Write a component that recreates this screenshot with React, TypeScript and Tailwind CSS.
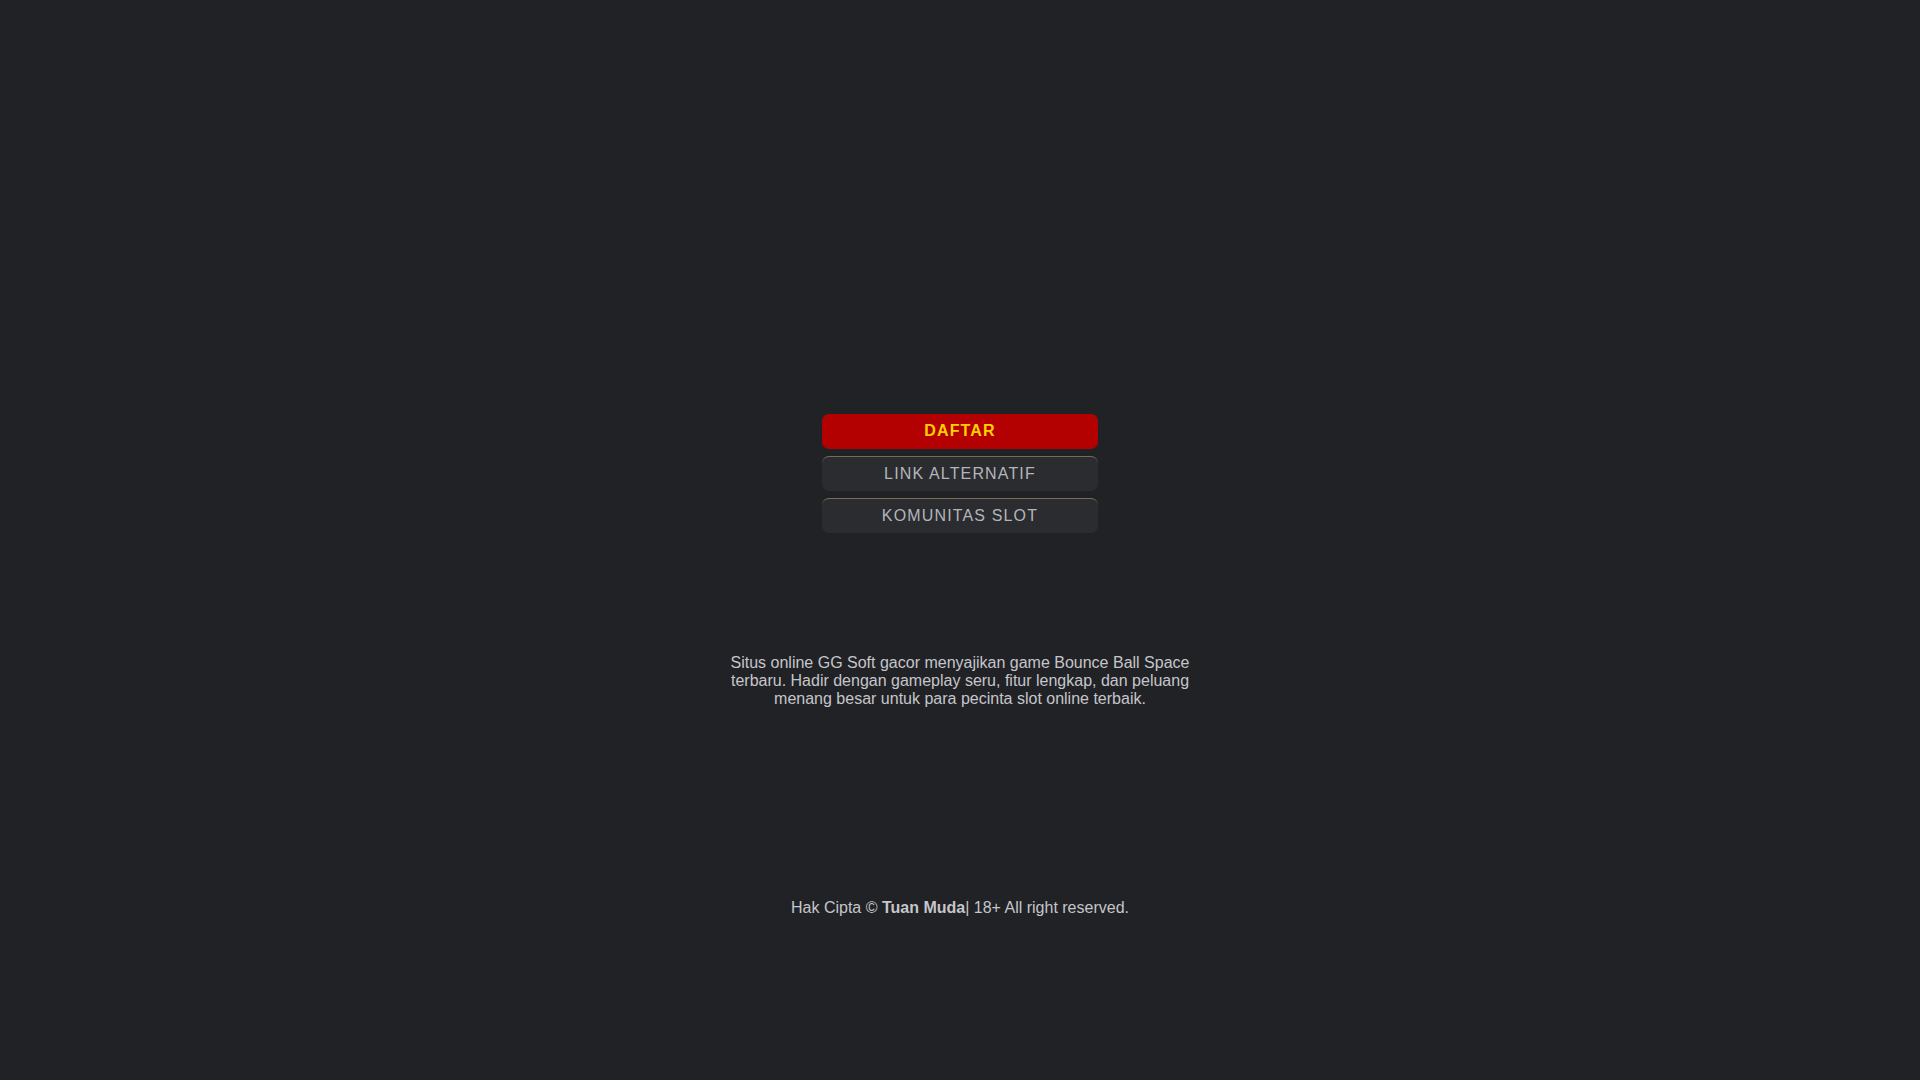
export default function App() {
  const btn =
    'flex h-[35px] w-[276px] items-center justify-center rounded-[7px] text-[16px] leading-none tracking-[1.15px]';
  return (
    <div className="min-h-screen bg-[#212226] font-['Liberation_Sans',Arial,sans-serif] text-[#c5c6ca]">
      <div className="flex flex-col items-center pt-[414px]">
        {/* Buttons */}
        <div className="flex flex-col gap-[7px]">
          <a className={`${btn} h-[34px] pb-[1px] bg-[#b30000] font-bold text-[#ffd000]`}>DAFTAR</a>
          <a className={`${btn} pb-[1px] border-t border-[#7d6c52] bg-[#2b2c2f] text-[#b4b5ba]`}>LINK ALTERNATIF</a>
          <a className={`${btn} pb-[1px] border-t border-[#7d6c52] bg-[#2b2c2f] text-[#b4b5ba]`}>KOMUNITAS SLOT</a>
        </div>

        {/* Description */}
        <p className="mt-[121px] w-[470px] text-center text-[16px] leading-[18px]">
          Situs online GG Soft gacor menyajikan game Bounce Ball Space terbaru. Hadir dengan gameplay seru, fitur lengkap, dan peluang menang besar untuk para pecinta slot online terbaik.
        </p>

        {/* Footer */}
        <footer className="mt-[191px] text-[16px] leading-[18px] text-[#c5c6ca]">
          Hak Cipta © <b>Tuan Muda</b>| 18+ All right reserved.
        </footer>
      </div>
    </div>
  );
}
